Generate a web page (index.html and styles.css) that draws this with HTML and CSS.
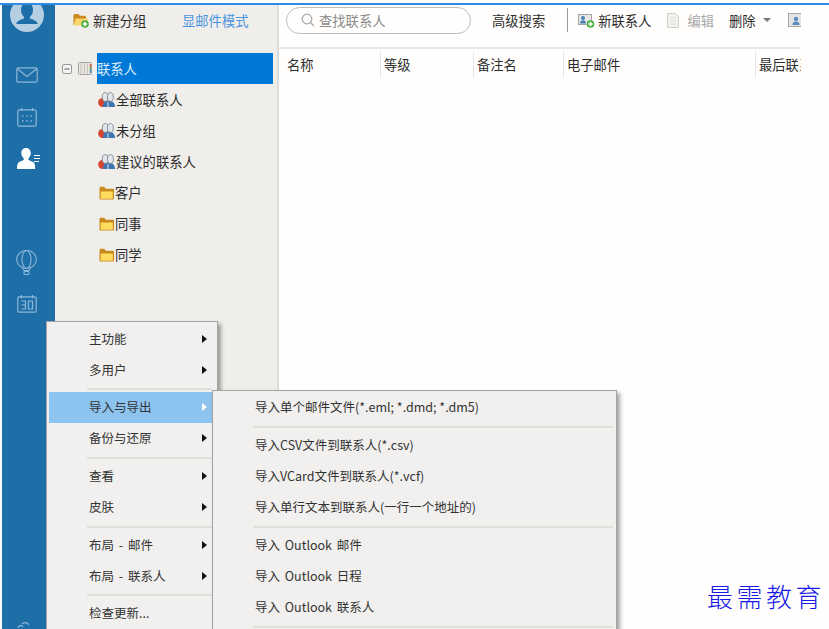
FILE: index.html
```html
<!DOCTYPE html>
<html lang="zh-CN">
<head>
<meta charset="utf-8">
<title>联系人</title>
<link rel="stylesheet" href="styles.css">
</head>
<body>
<svg class="defs" width="0" height="0">
  <defs>
    <symbol id="group" viewBox="0 0 17 15">
      <ellipse cx="4.500" cy="10.500" rx="4.300" ry="4.500" fill="#d8452f"/>
      <path d="M5 15c0-4 1.500-6.500 5.500-6.500s6.500 2.500 6.500 6.500z" fill="#3d76b0"/>
      <ellipse cx="7.300" cy="5" rx="3" ry="4.400" fill="#e4e7ea" stroke="#7f8a96" stroke-width="0.900"/>
      <ellipse cx="12.400" cy="5" rx="3" ry="4.400" fill="#e4e7ea" stroke="#7f8a96" stroke-width="0.900"/>
      <path d="M10 10v5" stroke="#d6e2ee" stroke-width="1"/>
    </symbol>
    <symbol id="folder" viewBox="0 0 15 14">
      <path d="M0.500 12.500V2q0-1.200 1.200-1.200h3.600l1.500 2h7q1.200 0 1.200 1.200v8.500q0 1-1.200 1H1.500q-1 0-1-1z" fill="#c98a1e"/>
      <path d="M2.500 5.500h10.500q0.800 0 0.800 0.800v5.900q0 0.600-0.800 0.600H2.500q-0.800 0-0.800-0.600V6.300q0-0.800 0.800-0.800z" fill="#ffdc5e"/>
    </symbol>
    <symbol id="arrow" viewBox="0 0 5 8">
      <path d="M0 0l5 4-5 4z"/>
    </symbol>
  </defs>
</svg>
<div class="stripe"></div>
<div class="window">
  <nav class="rail">
    <svg class="avatar" width="34" height="27" viewBox="0 0 34 27">
      <circle cx="17" cy="10" r="17" fill="#b4cfe2"/>
      <path d="M17 -2c3.800 0 6 2.800 6 7 0 3.200-1.300 5.400-3 6.800v1.700c3 1 6.500 2.200 7.500 4.500 0.300 0.900 0.300 1-0.500 1H7c-0.800 0-0.800-0.100-0.500-1 1-2.300 4.500-3.500 7.500-4.500v-1.700c-1.700-1.400-3-3.600-3-6.800 0-4.200 2.200-7 6-7z" fill="#1e6ea8"/>
    </svg>
    <svg class="rail-mail" width="22" height="16" viewBox="0 0 22 16" fill="none" stroke="#8db8d6" stroke-width="1.200">
      <rect x="0.800" y="0.800" width="20.400" height="14.400" rx="1.500"/>
      <path d="M1.300 1.800l9.700 7.700 9.700-7.700"/>
    </svg>
    <svg class="rail-cal" width="20" height="19" viewBox="0 0 20 19" fill="none" stroke="#8db8d6" stroke-width="1.200">
      <rect x="0.800" y="1.800" width="18.400" height="16.400" rx="1.500"/>
      <path d="M4.500 0v3M15.500 0v3" />
      <path d="M5 8h1.400M9.300 8h1.400M13.600 8h1.400M5 13h1.400M9.300 13h1.400M13.600 13h1.400" stroke-width="1.400"/>
    </svg>
    <svg class="rail-user" width="23" height="21" viewBox="0 0 23 21">
      <path d="M9 0c3 0 4.800 2.200 4.800 5 0 2.300-1 4.100-2.300 5.200v1.900c2.300 0.800 5 1.700 6 3.600 0.700 1.400 0.700 5.300 0.700 5.300H0s0-3.900 0.700-5.300c1-1.900 3.700-2.800 6-3.600v-1.900C5.400 9.100 4.300 7.300 4.300 5 4.300 2.200 6 0 9 0z" fill="#fff"/>
      <path d="M17 7.500h6M17 10.500h6M17 13.500h5" stroke="#fff" stroke-width="1"/>
    </svg>
    <svg class="rail-balloon" width="21" height="25" viewBox="0 0 21 25" fill="none" stroke="#8db8d6" stroke-width="1.100">
      <ellipse cx="10.500" cy="9.500" rx="9.800" ry="9"/>
      <ellipse cx="10.500" cy="9.500" rx="4.500" ry="9"/>
      <path d="M6.500 18l1.500 2.500h5l1.500-2.500"/>
      <rect x="8" y="21.500" width="5" height="3" rx="0.800"/>
    </svg>
    <svg class="rail-thirty" width="20" height="18" viewBox="0 0 20 18" fill="none" stroke="#8db8d6" stroke-width="1.200">
      <rect x="0.800" y="1.800" width="18.400" height="15.400" rx="1.500"/>
      <path d="M4.500 0v3.500M15.500 0v3.500"/>
      <path d="M4.500 6h4v8h-4M4.500 10h4M11.500 6h4v8h-4z"/>
    </svg>
    <svg class="rail-foot" width="14" height="8" viewBox="0 0 14 8" fill="none" stroke="#8db8d6" stroke-width="1.300">
      <path d="M1 7c1-3 4-3 5-1M5 3c2-2 5-2 7 1"/>
    </svg>
  </nav>

  <aside class="panel">
    <div class="panel-tools">
      <span class="tool-new">
        <svg width="16" height="15" viewBox="0 0 16 15">
          <path d="M0.500 12V2q0-1 1-1h4l1.500 1.800h5q1 0 1 1V12z" fill="#c98a1e"/>
          <path d="M2.500 5.500H15L13 12.500H0.700z" fill="#fbd66b"/>
          <circle cx="12" cy="11" r="3.800" fill="#49b13d"/>
          <path d="M12 8.800v4.400M9.800 11h4.400" stroke="#fff" stroke-width="1.500"/>
        </svg>
        新建分组
      </span>
      <span class="tool-mode">显邮件模式</span>
    </div>
    <ul class="tree">
      <li class="tree-root">
        <svg class="tree-toggle" width="10" height="10" viewBox="0 0 10 10">
          <rect x="0.500" y="0.500" width="9" height="9" rx="1.500" fill="#f4f4f4" stroke="#9a9a9a"/>
          <path d="M2.500 5h5" stroke="#555" stroke-width="1"/>
        </svg>
        <svg class="tree-book" width="14" height="13" viewBox="0 0 14 13">
          <rect x="0.500" y="0.500" width="13" height="12" rx="1" fill="#e9e6df" stroke="#a3a3a3"/>
          <path d="M3 1.500v10M6.500 1.500v10M9.500 1.500v10" stroke="#c4c1b9"/>
          <path d="M12.500 2v3" stroke="#e2574c" stroke-width="1.500"/>
          <path d="M12.500 5v3" stroke="#62b34b" stroke-width="1.500"/>
          <path d="M12.500 8v3" stroke="#4d8fd6" stroke-width="1.500"/>
        </svg>
        <span class="tree-selected">联系人</span>
      </li>
      <li class="tree-item"><svg class="tree-group" width="17" height="15"><use href="#group"/></svg>全部联系人</li>
      <li class="tree-item"><svg class="tree-group" width="17" height="15"><use href="#group"/></svg>未分组</li>
      <li class="tree-item"><svg class="tree-group" width="17" height="15"><use href="#group"/></svg>建议的联系人</li>
      <li class="tree-item"><svg class="tree-folder" width="15" height="14"><use href="#folder"/></svg>客户</li>
      <li class="tree-item"><svg class="tree-folder" width="15" height="14"><use href="#folder"/></svg>同事</li>
      <li class="tree-item"><svg class="tree-folder" width="15" height="14"><use href="#folder"/></svg>同学</li>
    </ul>
  </aside>

  <main class="main">
    <div class="main-tools">
      <div class="search">
        <svg width="14" height="14" viewBox="0 0 14 14" fill="none" stroke="#a8a8a8" stroke-width="1.300">
          <circle cx="6" cy="6" r="4.800"/>
          <path d="M9.500 9.500L13 13"/>
        </svg>
        <span>查找联系人</span>
      </div>
      <span class="tool-adv">高级搜索</span>
      <span class="tool-sep"></span>
      <span class="tool-add">
        <svg width="17" height="15" viewBox="0 0 17 15">
          <rect x="0.500" y="1.500" width="13" height="10" fill="#e6e6e6" stroke="#a5a5a5"/>
          <circle cx="5" cy="5" r="2" fill="#4a7fb5"/>
          <path d="M2 10.500c0-2.500 1.500-3.200 3-3.200s3 0.700 3 3.200z" fill="#4a7fb5"/>
          <circle cx="12.500" cy="11" r="3.800" fill="#49b13d"/>
          <path d="M12.500 8.800v4.400M10.300 11h4.400" stroke="#fff" stroke-width="1.500"/>
        </svg>
        新联系人
      </span>
      <span class="tool-edit">
        <svg width="12" height="15" viewBox="0 0 12 15">
          <path d="M0.500 0.500h8l3 3v11h-11z" fill="#f3f2ee" stroke="#cfcdc8"/>
          <path d="M3 5h6M3 8h6M3 11h6" stroke="#dcdad5"/>
        </svg>
        编辑
      </span>
      <span class="tool-del">删除<i class="caret"></i></span>
      <svg class="tool-more" width="13" height="15" viewBox="0 0 13 15">
        <rect x="0.500" y="0.500" width="16" height="13" fill="#e4e4e4" stroke="#a8a8a8"/>
        <circle cx="8" cy="6" r="2.200" fill="#5a8fc0"/>
        <path d="M4.500 12c0-2.800 1.500-3.500 3.500-3.500s3.500 0.700 3.500 3.500z" fill="#5a8fc0"/>
      </svg>
    </div>
    <div class="columns">
      <span class="col col-name">名称</span>
      <span class="col col-level">等级</span>
      <span class="col col-note">备注名</span>
      <span class="col col-mail">电子邮件</span>
      <span class="col col-last">最后联系时间</span>
    </div>
  </main>
</div>

<div class="menu menu-main">
  <div class="menu-item">主功能<svg class="menu-arrow" width="5" height="8"><use href="#arrow"/></svg></div>
  <div class="menu-item">多用户<svg class="menu-arrow" width="5" height="8"><use href="#arrow"/></svg></div>
  <div class="menu-sep"></div>
  <div class="menu-item is-active">导入与导出<svg class="menu-arrow" width="5" height="8"><use href="#arrow"/></svg></div>
  <div class="menu-item">备份与还原<svg class="menu-arrow" width="5" height="8"><use href="#arrow"/></svg></div>
  <div class="menu-sep menu-sep-wide"></div>
  <div class="menu-item">查看<svg class="menu-arrow" width="5" height="8"><use href="#arrow"/></svg></div>
  <div class="menu-item">皮肤<svg class="menu-arrow" width="5" height="8"><use href="#arrow"/></svg></div>
  <div class="menu-sep menu-sep-wide"></div>
  <div class="menu-item wide-space">布局 - 邮件<svg class="menu-arrow" width="5" height="8"><use href="#arrow"/></svg></div>
  <div class="menu-item wide-space">布局 - 联系人<svg class="menu-arrow" width="5" height="8"><use href="#arrow"/></svg></div>
  <div class="menu-sep"></div>
  <div class="menu-item">检查更新...</div>
</div>

<div class="menu menu-sub">
  <div class="menu-item">导入单个邮件文件(*.eml; *.dmd; *.dm5)</div>
  <div class="menu-sep menu-sep-wide"></div>
  <div class="menu-item">导入CSV文件到联系人(*.csv)</div>
  <div class="menu-item">导入VCard文件到联系人(*.vcf)</div>
  <div class="menu-item">导入单行文本到联系人(一行一个地址的)</div>
  <div class="menu-sep menu-sep-wide"></div>
  <div class="menu-item wide-space">导入 Outlook 邮件</div>
  <div class="menu-item wide-space">导入 Outlook 日程</div>
  <div class="menu-item wide-space">导入 Outlook 联系人</div>
  <div class="menu-sep menu-sep-wide"></div>
</div>

<div class="watermark">最需教育</div>
</body>
</html>
```
FILE: styles.css
```css
* { box-sizing: border-box; }

html, body {
  margin: 0;
  height: 629px;
  overflow: hidden;
  background: #fffefc;
}

body {
  position: relative;
  font-family: "Noto Sans CJK SC", "Open Sans", sans-serif;
  font-size: 13.3px;
  color: #2c2c2c;
}

.defs { position: absolute; }

.stripe {
  height: 2px;
  margin-top: 3px;
  background: #2f8be6;
}

.window {
  display: flex;
  width: 799px;
  height: 624px;
  margin-left: 2px;
}

/* Left rail */
.rail {
  flex: none;
  width: 53px;
  background: #1e6ea8;
  display: flex;
  flex-direction: column;
  align-items: flex-start;
}
.rail svg { display: block; flex: none; }
.avatar { margin-left: 8px; }
.rail-mail { margin: 35px 0 0 14px; }
.rail-cal { margin: 25px 0 0 15px; }
.rail-user { margin: 21px 0 0 15px; }
.rail-balloon { margin: 81px 0 0 14px; }
.rail-thirty { margin: 20px 0 0 15px; }
.rail-foot { margin: auto 0 0 15px; }

/* Folder panel */
.panel {
  flex: none;
  width: 224px;
  background: #f0eeeb;
  border-right: 2px solid #dcdcdc;
}
.panel-tools {
  display: flex;
  align-items: center;
  height: 30px;
  padding-left: 18px;
}
.tool-new {
  display: flex;
  align-items: center;
  gap: 4px;
  width: 109px;
}
.tool-mode { color: #4a94de; }

.tree {
  list-style: none;
  margin: 18px 0 0;
  padding: 0;
}
.tree-root {
  display: flex;
  align-items: center;
  height: 31px;
  padding-left: 7px;
}
.tree-toggle { margin-right: 6px; }
.tree-book { margin-right: 5px; }
.tree-selected {
  flex: none;
  width: 176px;
  height: 31px;
  line-height: 31px;
  background: #0078d7;
  color: #dcecf8;
}
.tree-item {
  display: flex;
  align-items: center;
  height: 31px;
  padding-left: 43px;
}
.tree-group { margin-right: 1px; }
.tree-folder { margin-right: 1px; margin-left: 1px; }

/* Contact list */
.main {
  flex: 1;
  min-width: 0;
  overflow: hidden;
}
.main-tools {
  display: flex;
  align-items: center;
  height: 42px;
  padding: 0 0 12px 7px;
}
.search {
  flex: none;
  display: flex;
  align-items: center;
  gap: 4px;
  width: 185px;
  height: 27px;
  padding-left: 14px;
  border: 1px solid #bdbdbd;
  border-radius: 14px;
  color: #8a8a8a;
}
.tool-adv { margin-left: 21px; }
.tool-sep {
  width: 1px;
  height: 24px;
  margin: 0 10px 0 22px;
  background: #9a9a9a;
}
.tool-add, .tool-edit {
  display: flex;
  align-items: center;
  gap: 3px;
}
.tool-edit { margin-left: 16px; gap: 8px; color: #a8a8a8; }
.tool-del {
  display: flex;
  align-items: center;
  margin-left: 15px;
}
.caret {
  width: 0;
  height: 0;
  margin-left: 7px;
  border-left: 4px solid transparent;
  border-right: 4px solid transparent;
  border-top: 4px solid #777;
}
.tool-more { margin-left: 17px; flex: none; }

.columns {
  display: flex;
  align-items: center;
  height: 32px;
  padding-top: 1px;
  border-top: 2px solid #e9e8e6;
  white-space: nowrap;
}
.col {
  flex: none;
  height: 26px;
  line-height: 26px;
  padding-left: 3px;
  border-left: 1px solid #e6e6e6;
}
.col-name { width: 101px; padding-left: 8px; border-left: 0; }
.col-level { width: 93px; }
.col-note { width: 90px; }
.col-mail { width: 192px; }
.col-last { width: 100px; }

/* Context menus */
.menu {
  position: absolute;
  background: #f1f0ee;
  border: 1px solid #a3a3a3;
  font-size: 12.5px;
  color: #333;
  box-shadow: 3px 3px 4px rgba(0, 0, 0, 0.35);
}
.menu-main {
  left: 46px;
  top: 321px;
  width: 172px;
  height: 320px;
  padding: 2px 5px 0 2px;
}
.menu-sub {
  left: 212px;
  top: 390px;
  width: 405px;
  height: 250px;
  padding: 1px 3px 0 0;
}
.menu-item {
  position: relative;
  height: 31px;
  line-height: 29px;
  white-space: nowrap;
}
.wide-space { word-spacing: 2px; }
.menu-main .menu-item { padding-left: 40px; }
.menu-sub .menu-item { padding-left: 42px; }
.menu-arrow {
  position: absolute;
  right: 5px;
  top: 11px;
  fill: #111;
}
.is-active { background: #8dc3ef; }
.is-active .menu-arrow { fill: #fff; }
.menu-sep {
  height: 6px;
  background: linear-gradient(#e0dedb, #e0dedb) center / 100% 2px no-repeat;
}
.menu-sep-wide { height: 7px; }
.menu-main .menu-sep { margin-left: 38px; }
.menu-sub .menu-sep { margin-left: 40px; }

.watermark {
  position: absolute;
  left: 707px;
  top: 578px;
  font-size: 26px;
  font-weight: 300;
  line-height: 36px;
  letter-spacing: 3.5px;
  color: #1818e8;
  white-space: nowrap;
}
```
